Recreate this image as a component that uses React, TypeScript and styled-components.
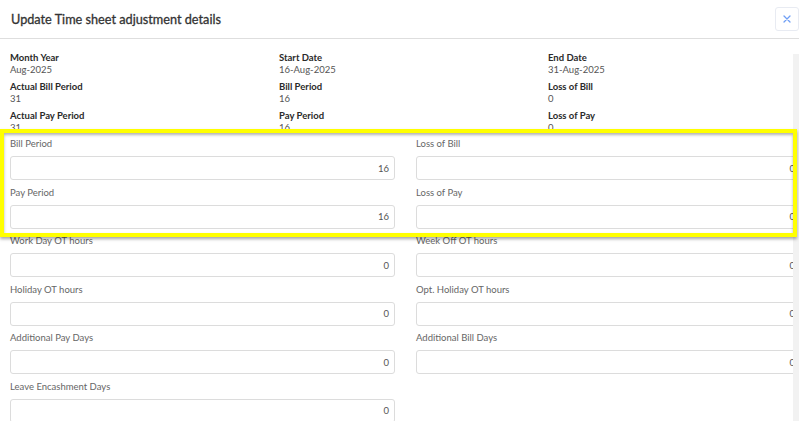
import React from "react";
import styled, { createGlobalStyle } from "styled-components";

const Global = createGlobalStyle`
  html, body { margin: 0; padding: 0; background: #fff; }
  body { font-family: Lato, "Noto Sans", Arial, sans-serif; overflow: hidden; }
  * { box-sizing: border-box; }
`;

const Modal = styled.div`
  position: relative;
  width: 799px;
  height: 421px;
  overflow: hidden;
  background: #fff;
`;

const Header = styled.div`
  height: 39px;
  display: flex;
  align-items: center;
  justify-content: space-between;
  padding-left: 11px;
  border-bottom: 1px solid #dedede;
`;

const Title = styled.h4`
  margin: 0;
  font-size: 12.7px;
  font-weight: 400;
  color: #333;
  -webkit-text-stroke: 0.3px #333;
`;

const CloseBtn = styled.button`
  width: 24px;
  height: 24px;
  border: 1px solid #e8ebf2;
  border-radius: 3px;
  background: #fff;
  display: flex;
  align-items: center;
  justify-content: center;
  padding: 0;
`;

const Body = styled.div`
  display: flex;
  height: 382px;
`;

const Content = styled.div`
  width: 793px;
  overflow: hidden;
  padding: 13px 0 0 10px;
`;

const ScrollTrack = styled.div`
  width: 6px;
  margin-top: 15px;
  background: #f2f2f2;
`;

const InfoGrid = styled.div`
  display: grid;
  grid-template-columns: 269px 269px 269px;
`;

const InfoItem = styled.div`
  margin-bottom: 5px;
`;

const InfoLabel = styled.div`
  font-size: 9.5px;
  line-height: 12px;
  font-weight: 700;
  color: #2a2a2a;
`;

const InfoValue = styled.div`
  font-size: 9.5px;
  line-height: 12px;
  color: #555;
`;

const FormGrid = styled.div`
  display: grid;
  grid-template-columns: 385px 385px;
  column-gap: 21px;
  width: 791px;
  margin-top: -1px;
`;

const Field = styled.div`
  margin-bottom: 6.5px;
`;

const FieldLabel = styled.div`
  font-size: 9.5px;
  line-height: 12px;
  color: #666;
  margin-bottom: 6px;
`;

const NumInput = styled.div`
  height: 24px;
  border: 1px solid #dcdcdc;
  border-radius: 3px;
  display: flex;
  align-items: center;
  justify-content: flex-end;
  padding-right: 5px;
  font-size: 9.5px;
  color: #555;
`;

const Highlight = styled.div`
  position: absolute;
  left: 0;
  top: 129px;
  width: 797px;
  height: 108px;
  border: 4px solid #ffff00;
  box-shadow: 0 2px 3px rgba(0, 0, 0, 0.35), inset 0 2px 3px rgba(0, 0, 0, 0.3);
  pointer-events: none;
`;

const info: [string, string][] = [
  ["Month Year", "Aug-2025"],
  ["Start Date", "16-Aug-2025"],
  ["End Date", "31-Aug-2025"],
  ["Actual Bill Period", "31"],
  ["Bill Period", "16"],
  ["Loss of Bill", "0"],
  ["Actual Pay Period", "31"],
  ["Pay Period", "16"],
  ["Loss of Pay", "0"],
];

const fields: ([string, string] | null)[] = [
  ["Bill Period", "16"],
  ["Loss of Bill", "0"],
  ["Pay Period", "16"],
  ["Loss of Pay", "0"],
  ["Work Day OT hours", "0"],
  ["Week Off OT hours", "0"],
  ["Holiday OT hours", "0"],
  ["Opt. Holiday OT hours", "0"],
  ["Additional Pay Days", "0"],
  ["Additional Bill Days", "0"],
  ["Leave Encashment Days", "0"],
  null,
];

export default function App() {
  return (
    <>
      <Global />
      <Modal>
        <Header>
          <Title>Update Time sheet adjustment details</Title>
          <CloseBtn aria-label="close">
            <svg width="8" height="8" viewBox="0 0 8 8">
              <path d="M1 1L7 7M7 1L1 7" stroke="#6f9ff5" strokeWidth="1.3" strokeLinecap="round" />
            </svg>
          </CloseBtn>
        </Header>
        <Body>
          <Content>
            <InfoGrid>
              {info.map(([l, v], i) => (
                <InfoItem key={i}>
                  <InfoLabel>{l}</InfoLabel>
                  <InfoValue>{v}</InfoValue>
                </InfoItem>
              ))}
            </InfoGrid>
            <FormGrid>
              {fields.map((f, i) =>
                f ? (
                  <Field key={i}>
                    <FieldLabel>{f[0]}</FieldLabel>
                    <NumInput>{f[1]}</NumInput>
                  </Field>
                ) : (
                  <div key={i} />
                )
              )}
            </FormGrid>
          </Content>
          <ScrollTrack />
        </Body>
        <Highlight />
      </Modal>
    </>
  );
}
